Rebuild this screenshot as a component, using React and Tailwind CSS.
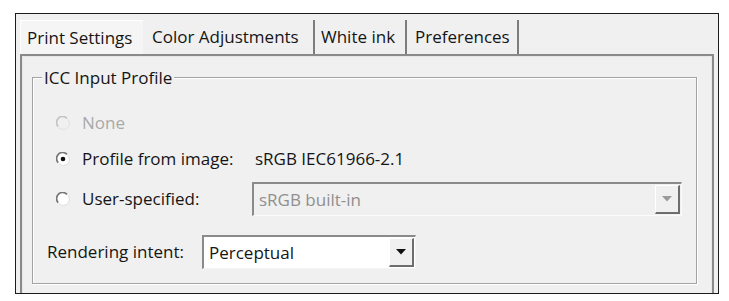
import React from "react";

function Radio({ checked, disabled }) {
  const dark = disabled ? "#c4c4c4" : "#777777";
  return (
    <svg width="14" height="14" viewBox="0 0 14 14" className="shrink-0">
      <circle cx="7" cy="7" r="6" fill={disabled ? "#f0f0f0" : "#ffffff"} />
      <path d="M2.2 10.6 A6 6 0 0 1 11 2.4" fill="none" stroke={dark} strokeWidth="1.7" />
      <path d="M11.8 3.4 A6 6 0 0 1 3 11.6" fill="none" stroke="#e4e4e4" strokeWidth="1.2" />
      {checked && <circle cx="7" cy="7" r="2.3" fill="#111" />}
    </svg>
  );
}

function Arrow({ color }) {
  return (
    <svg width="10" height="6" viewBox="0 0 10 6">
      <path d="M0 0 H10 L5 5.5 Z" fill={color} />
    </svg>
  );
}

function ComboButton({ color }) {
  return (
    <div className="w-[25px] h-[29px] bg-[#f0f0f0] border-t border-l border-[#ffffff] border-r-2 border-b-2 border-r-[#6e6e6e] border-b-[#6e6e6e] flex items-center justify-center">
      <Arrow color={color} />
    </div>
  );
}

const TABS = [
  { label: "Print Settings", cls: "w-[123px] pl-[6px] bg-[#f5f5f5] border-t border-l border-white" },
  { label: "Color Adjustments", cls: "w-[172px] pl-[9px] border-r-2 border-[#7d7d7d]" },
  { label: "White ink", cls: "w-[92px] pl-[6px] border-r-2 border-[#7d7d7d]" },
  { label: "Preferences", cls: "w-[112px] pl-[8px] border-r-2 border-[#7d7d7d]" },
];

export default function App() {
  return (
    <div
      className="w-[729px] h-[301px] bg-white pt-[13px] pl-[15px]"
      style={{ fontFamily: '"Open Sans", "Noto Sans", sans-serif' }}
    >
      <div className="w-[704px] h-[281px] border border-[#1c1c1c] bg-[#f0f0f0] flex flex-col overflow-hidden text-[17px] text-[#151515]">
        <div className="h-[40px] flex items-end pl-[4px] shrink-0">
          {TABS.map((t) => (
            <div key={t.label} className={`h-[34px] flex items-center ${t.cls}`}>
              {t.label}
            </div>
          ))}
        </div>
        <div className="flex-1 mx-[4px] border-t-2 border-l-2 border-r-2 border-[#8a8a8a] flex flex-col">
          <div className="flex-1 border-t border-l border-r border-[#e6e6e6] pt-[20px] pl-[9px] pr-[14px] pb-[9px] flex flex-col">
            <div className="relative flex-1 border border-[#a3a3a3] shadow-[inset_1px_1px_0_#ffffff,1px_1px_0_#ffffff] pl-[23px] pr-[14px]">
              <span className="absolute -top-[13px] left-[9px] bg-[#f0f0f0] px-[2px]">
                ICC Input Profile
              </span>
              <div className="mt-[28px] h-[34px] flex items-center text-[#a9a9a9]">
                <Radio disabled />
                <span className="ml-[12px]">None</span>
              </div>
              <div className="mt-[2px] h-[34px] flex items-center">
                <Radio checked />
                <span className="ml-[12px] w-[173px]">Profile from image:</span>
                <span>sRGB IEC61966-2.1</span>
              </div>
              <div className="mt-[6px] h-[34px] flex items-center">
                <Radio />
                <span className="ml-[12px] w-[170px]">User-specified:</span>
                <div className="flex-1 h-[34px] border-t-2 border-l-2 border-[#8a8a8a] border-b border-r border-b-[#fbfbfb] border-r-[#fbfbfb] flex items-center justify-between pl-[5px] pr-[1px]">
                  <span className="text-[#8f8f8f]">sRGB built-in</span>
                  <ComboButton color="#9a9a9a" />
                </div>
              </div>
              <div className="mt-[19px] -ml-[9px] h-[34px] flex items-center">
                <span className="w-[155px]">Rendering intent:</span>
                <div className="w-[214px] h-[34px] bg-white border-t-2 border-l-2 border-[#8a8a8a] border-b border-r border-b-[#f4f4f4] border-r-[#f4f4f4] flex items-center justify-between pl-[5px] pr-[1px]">
                  <span>Perceptual</span>
                  <ComboButton color="#111" />
                </div>
              </div>
            </div>
          </div>
        </div>
      </div>
    </div>
  );
}
